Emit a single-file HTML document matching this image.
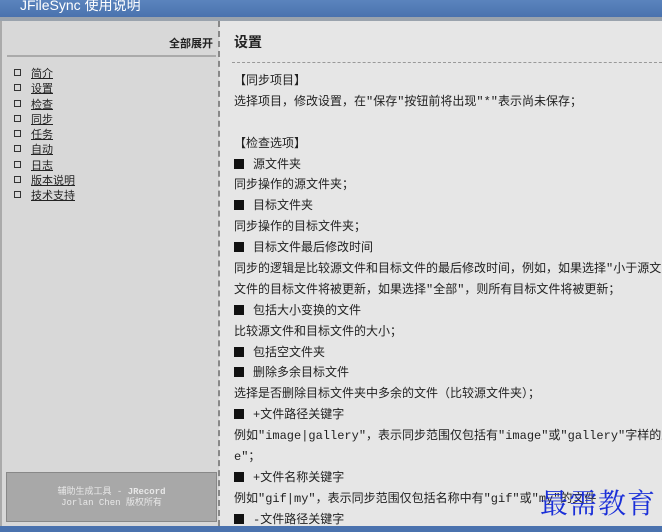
<!DOCTYPE html>
<html><head><meta charset="utf-8"><style>
*{margin:0;padding:0;box-sizing:border-box}
body{width:662px;height:532px;overflow:hidden;background:#e6e6e6;font-family:"Liberation Sans","Noto Sans CJK SC",sans-serif;position:relative;color:#222}
#title{position:absolute;left:0;top:0;width:662px;height:17px;background:linear-gradient(#5b84bd,#4a72ae);color:#fff;font-size:14px;line-height:11px;padding-left:20px;overflow:hidden}
#strip{position:absolute;left:0;top:17px;width:662px;height:4px;background:#9aa3ad}
#left{position:absolute;left:0;top:21px;width:219px;height:505px;background:#d8d8d8;border-left:2px solid #aaa}
#sep{position:absolute;left:218px;top:21px;height:505px;border-left:2px dashed #888}
#bottom{position:absolute;left:0;top:526px;width:662px;height:6px;background:#4a72ae}
.exp{position:absolute;right:6px;top:14px;font-size:11px;font-weight:bold}
.hr{position:absolute;left:5px;top:34px;width:209px;height:2px;background:#aaa}
ul{position:absolute;left:12px;top:46px;list-style:none}
li{font-size:11px;height:15.3px;line-height:15px;text-decoration:underline}
li::before{content:"";display:inline-block;width:5px;height:5px;border:1px solid #333;margin-right:10px;vertical-align:1px}
.foot{position:absolute;left:4px;top:451px;width:211px;height:50px;background:#a8a8a8;border:1px solid #888;color:#e8e8e8;font-size:9px;text-align:center;padding-top:14px;line-height:11px;font-family:"Liberation Mono","Noto Sans CJK SC",monospace}
#right{position:absolute;left:234px;top:34px;width:428px;font-size:12px;color:#222;font-family:"Liberation Mono","Noto Sans CJK SC",monospace}
h1{font-size:14px;font-weight:bold;height:20px;line-height:20px}
.dash{border-top:1px dashed #999;margin:8px 0 8px -2px;width:430px}
.l{height:20.9px;line-height:21px;white-space:nowrap}
.b{display:inline-block;width:10px;height:10px;background:#111;margin-right:9px;vertical-align:-1px}
.wm{position:absolute;left:540px;top:482px;font-family:"Noto Serif CJK SC",serif;font-size:28px;color:#1a2fd8;letter-spacing:1px}
</style></head><body>
<div id="title">JFileSync 使用说明</div>
<div id="strip"></div>
<div id="left">
<div class="exp">全部展开</div>
<div class="hr"></div>
<ul><li>简介</li><li>设置</li><li>检查</li><li>同步</li><li>任务</li><li>自动</li><li>日志</li><li>版本说明</li><li>技术支持</li></ul>
<div class="foot">辅助生成工具 - <b>JRecord</b><br>Jorlan Chen 版权所有</div>
</div>
<div id="sep"></div>
<div id="right">
<h1>设置</h1>
<div class="dash"></div>
<div class="l">【同步项目】</div>
<div class="l">选择项目，修改设置，在"保存"按钮前将出现"*"表示尚未保存；</div>
<div class="l"></div>
<div class="l">【检查选项】</div>
<div class="l"><span class="b"></span>源文件夹</div>
<div class="l">同步操作的源文件夹；</div>
<div class="l"><span class="b"></span>目标文件夹</div>
<div class="l">同步操作的目标文件夹；</div>
<div class="l"><span class="b"></span>目标文件最后修改时间</div>
<div class="l">同步的逻辑是比较源文件和目标文件的最后修改时间，例如，如果选择"小于源文</div>
<div class="l">文件的目标文件将被更新，如果选择"全部"，则所有目标文件将被更新；</div>
<div class="l"><span class="b"></span>包括大小变换的文件</div>
<div class="l">比较源文件和目标文件的大小；</div>
<div class="l"><span class="b"></span>包括空文件夹</div>
<div class="l"><span class="b"></span>删除多余目标文件</div>
<div class="l">选择是否删除目标文件夹中多余的文件（比较源文件夹）；</div>
<div class="l"><span class="b"></span>+文件路径关键字</div>
<div class="l">例如"image|gallery"，表示同步范围仅包括有"image"或"gallery"字样的路径</div>
<div class="l">e"；</div>
<div class="l"><span class="b"></span>+文件名称关键字</div>
<div class="l">例如"gif|my"，表示同步范围仅包括名称中有"gif"或"my"的文件</div>
<div class="l"><span class="b"></span>-文件路径关键字</div>
</div>
<div id="bottom"></div>
<div class="wm">最需教育</div>
</body></html>
